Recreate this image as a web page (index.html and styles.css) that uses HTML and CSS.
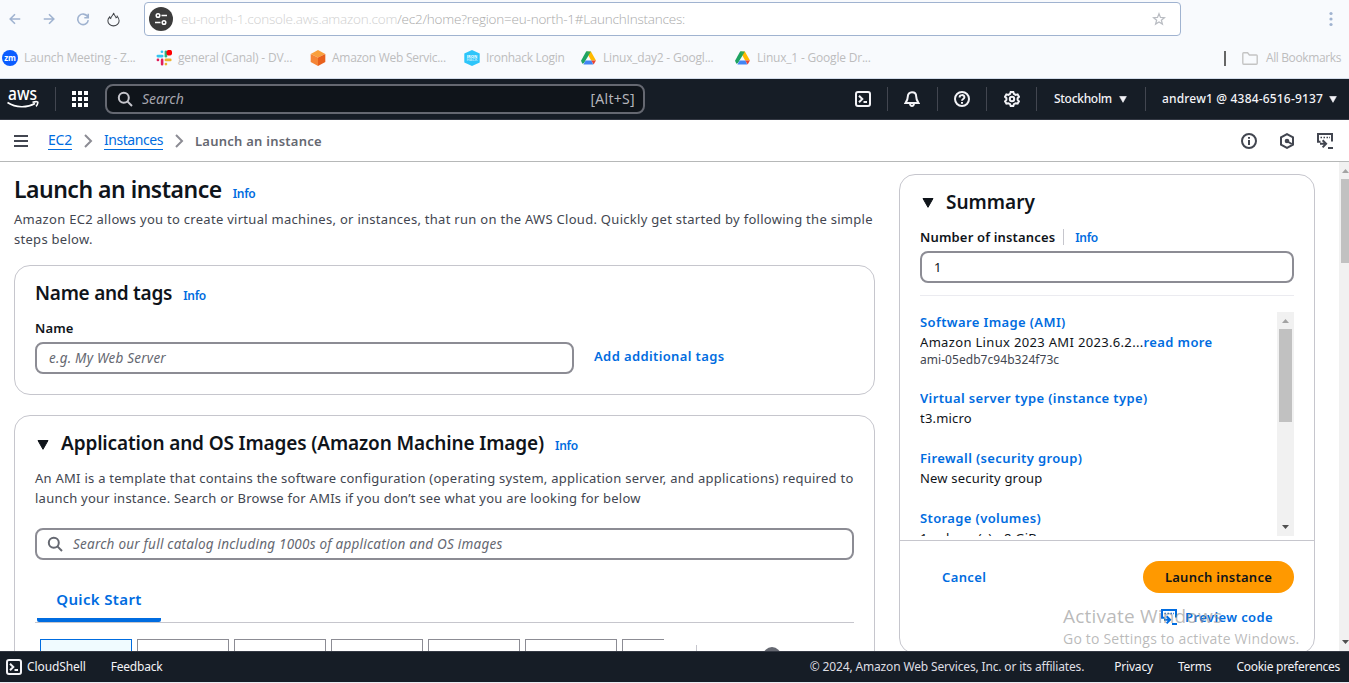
FILE: index.html
```html
<!DOCTYPE html>
<html lang="en">
<head>
<meta charset="utf-8">
<title>Launch an instance | EC2</title>
<link rel="stylesheet" href="styles.css">
</head>
<body>
<svg class="defs" aria-hidden="true">
  <symbol id="shell" viewBox="0 0 16 16"><rect x="1" y="1" width="14" height="14" rx="2"/><path d="M4 4.800 7.300 8 4 11.200M8.500 11H12"/></symbol>
  <symbol id="lens" viewBox="0 0 16 16"><circle cx="6.800" cy="6.800" r="5"/><path d="m10.400 10.400 4.600 4.600"/></symbol>
  <symbol id="code" viewBox="0 0 16 16"><path d="M15 8.500V1H1v7.800h2.500M11 15h5M3 10.800h6M5.600 7.200l3.500 3.600-3.500 3.600"/><path d="M3.500 4.400h1.500M6.500 4.400H8M9.500 4.400h1.500M12 4.400h.8" stroke-width="1.500"/></symbol>
  <symbol id="chev" viewBox="0 0 16 16"><path d="m5 2 6 6-6 6"/></symbol>
  <symbol id="drive" viewBox="0 0 16 14"><path fill="#1ea362" d="M5.500 0H8L8 4.400 3.200 12.400 1.500 13.200 0 10z"/><path fill="#ffba00" d="M8 0h2.600L16 9.600h-5.200L8 4.600z"/><path fill="#34a853" d="M5.500 0h5L8 4.600z"/><path fill="#4285f4" d="M5 9.600h6.200L13 14H2.500z"/><path fill="#ea4335" d="M11 9.600h5L13.400 14z"/></symbol>
  <symbol id="down" viewBox="0 0 12 10"><path d="M1 .5h10L6 9.300z" fill="currentColor" stroke="currentColor" stroke-width="1" stroke-linejoin="round"/></symbol>
</svg>

<header class="browser">
  <div class="toolbar">
    <div class="navbtns">
      <svg class="bi" viewBox="0 0 16 16"><path d="M14 8H2.500M8 2.500 2.500 8 8 13.500"/></svg>
      <svg class="bi" viewBox="0 0 16 16"><path d="M2 8h11.500M8 2.500 13.500 8 8 13.500"/></svg>
      <svg class="bi" viewBox="0 0 16 16"><path d="M13.200 5.300A6 6 0 1 0 14 9.200M14 2v4.500H9.500"/></svg>
      <svg class="bi flame" viewBox="0 0 16 16"><path d="M8.200 1c.2 2.500 2.300 3.600 2.600 5.200.8-.3 1.100-1 1.200-1.700 1 1.300 2 3 2 4.700a6 5.600 0 0 1-12 0c0-1.700 1-3.100 1.900-4 .1.900.5 1.500 1.100 1.800C5.200 4.500 7.800 3.600 8.200 1z"/></svg>
    </div>
    <div class="urlbar">
      <span class="site"><svg viewBox="0 0 24 24"><circle cx="9" cy="8.500" r="1.800"/><path d="M12.500 8.500H18M6 15.500h5.500"/><circle cx="15" cy="15.500" r="1.800"/></svg></span>
      <span class="url"><span class="host">eu-north-1.console.aws.amazon.com</span>/ec2/home?region=eu-north-1#LaunchInstances:</span>
      <svg class="star" viewBox="0 0 16 16"><path d="m8 2 1.700 4.200 4.500.3-3.500 2.900 1.200 4.400L8 11.400l-3.900 2.400 1.200-4.400L1.800 6.500l4.500-.3z"/></svg>
    </div>
    <svg class="dots" viewBox="0 0 4 16"><circle cx="2" cy="2.500" r="1.600"/><circle cx="2" cy="8" r="1.600"/><circle cx="2" cy="13.500" r="1.600"/></svg>
  </div>
  <nav class="bookmarks">
    <span class="bm b1"><span class="zoomico">zm</span><span class="t">Launch Meeting - Z...</span></span>
    <span class="bm b2"><svg class="fav" viewBox="0 0 16 16"><g stroke-width="2.600" stroke-linecap="round" fill="none"><path stroke="#36c5f0" d="M1.800 6.100h4.400M5.900 1.800h.1"/><path stroke="#2eb67d" d="M9.900 1.800v4.400"/><path stroke="#ecb22e" d="M9.900 9.900h4.400M9.900 14.100h.1"/><path stroke="#e01e5a" d="M6.100 9.900v4.300M1.900 9.900H2"/></g><circle cx="13.300" cy="2.700" r="2.900" fill="#f00"/></svg><span class="t">general (Canal) - DV...</span></span>
    <span class="bm b3"><svg class="fav" viewBox="0 0 16 16"><path fill="#f9a03c" d="m8 0 7.300 4L8 7.500.7 4z"/><path fill="#f58536" d="M.7 4 8 7.500V16L.7 12z"/><path fill="#e8601c" d="M15.300 4 8 7.500V16l7.300-4z"/></svg><span class="t">Amazon Web Servic...</span></span>
    <span class="bm b4"><svg class="fav" viewBox="0 0 16 16"><path fill="#2dc5fa" d="m8 0 7.700 3.600v8.800L8 16 .3 12.400V3.600z"/><text class="iron" x="8" y="7.500">IRON</text><text class="iron dim" x="8" y="11">HACK</text></svg><span class="t">Ironhack Login</span></span>
    <span class="bm b5"><svg class="fav"><use href="#drive"/></svg><span class="t">Linux_day2 - Googl...</span></span>
    <span class="bm b6"><svg class="fav"><use href="#drive"/></svg><span class="t">Linux_1 - Google Dr...</span></span>
    <span class="allbm"><svg class="folder" viewBox="0 0 16 13"><path d="M.8 11V1.700c0-.5.3-.9.8-.9h4L7.400 3h6.900c.5 0 .9.300.9.800V11.300c0 .5-.4.900-.9.900H1.600c-.5 0-.8-.5-.8-1.200z"/></svg><span class="t">All Bookmarks</span></span>
  </nav>
</header>

<div class="awsnav">
  <svg class="awslogo" viewBox="0 0 32 22"><text x="1" y="12" textLength="29" lengthAdjust="spacingAndGlyphs">aws</text><path d="M.5 14.500C9 20 20 20 28 15.500"/><path d="M25.500 14.200c4-.9 5.700-.7 5.300.7-.2 1.200-.8 2.600-1.800 3.500"/></svg>
  <i class="vr v1"></i>
  <svg class="grid" viewBox="0 0 16 16"><path d="M0 0h4v4H0zM6 0h4v4H6zM12 0h4v4h-4zM0 6h4v4H0zM6 6h4v4H6zM12 6h4v4h-4zM0 12h4v4H0zM6 12h4v4H6zM12 12h4v4h-4z"/></svg>
  <div class="navsearch"><svg class="ico lens"><use href="#lens"/></svg><span class="ph">Search</span><span class="key">[Alt+S]</span></div>
  <div class="navright">
    <span class="cell"><svg class="ico"><use href="#shell"/></svg></span>
    <span class="cell"><svg class="ico" viewBox="0 0 16 16"><path d="M8 1.200c-2.600 0-4.200 1.900-4.200 4.300 0 3.200-1 4.500-2.300 6.500h13c-1.300-2-2.300-3.300-2.300-6.500 0-2.400-1.600-4.300-4.200-4.300zM6 12.500c.3 3.300 3.700 3.300 4 0"/></svg></span>
    <span class="cell"><svg class="ico" viewBox="0 0 16 16"><circle cx="8" cy="8" r="7"/><path d="M5.600 6.400c0-3 4.800-3 4.800-.2C10.400 8 8 7.900 8 9.700M8 11v1.700"/></svg></span>
    <span class="cell"><svg class="ico" viewBox="0 0 16 16"><path d="M6.700 1h2.600l.6 1.900 1.700 1 2-.5L15 5.800 13.600 7.200v1.700l1.400 1.400-1.400 2.300-2-.4-1.700 1L9.300 15H6.700l-.6-1.800-1.700-1-2 .4L1 10.300l1.400-1.400V7.200L1 5.800l1.400-2.400 2 .5 1.700-1z"/><circle cx="8" cy="8" r="2.200"/></svg></span>
    <span class="menu region"><span class="t">Stockholm</span><svg class="caret"><use href="#down"/></svg></span>
    <span class="menu acct"><span class="t">andrew1 @ 4384-6516-9137</span><svg class="caret"><use href="#down"/></svg></span>
  </div>
</div>

<div class="crumbs">
  <svg class="burger" viewBox="0 0 14 12"><path d="M0 1h14M0 6h14M0 11h14"/></svg>
  <a class="lnk c1">EC2</a>
  <svg class="chev k1"><use href="#chev"/></svg>
  <a class="lnk c2">Instances</a>
  <svg class="chev k2"><use href="#chev"/></svg>
  <span class="here">Launch an instance</span>
  <div class="tools">
    <svg class="ico" viewBox="0 0 16 16"><circle cx="8" cy="8" r="7"/><path d="M8 7v5M8 4v1.800"/></svg>
    <svg class="ico hex" viewBox="0 0 16 16"><path d="m8 1.100 6 3.200v7.400l-6 3.200-6-3.200V4.300z"/><circle class="dot" cx="8" cy="8" r="2.300"/><path d="m8.500 8.500 4.300 2.500"/></svg>
    <svg class="ico"><use href="#code"/></svg>
  </div>
</div>

<main class="content">
  <section class="left">
    <div class="head"><h1>Launch an instance</h1><a class="info">Info</a></div>
    <p class="desc"><span class="d1">Amazon EC2 allows you to create virtual machines, or instances, that run on the AWS Cloud. Quickly get started by following the simple</span><br><span class="d1">steps below.</span></p>

    <div class="card names">
      <div class="head"><h2 class="h-name">Name and tags</h2><a class="info">Info</a></div>
      <div class="label">Name</div>
      <div class="namerow"><div class="field"><span class="ph">e.g. My Web Server</span></div><a class="blink addtags">Add additional tags</a></div>
    </div>

    <div class="card images">
      <div class="head"><svg class="caret big"><use href="#down"/></svg><h2 class="h-app">Application and OS Images (Amazon Machine Image)</h2><a class="info">Info</a></div>
      <p class="desc"><span class="d3">An AMI is a template that contains the software configuration (operating system, application server, and applications) required to</span><br><span class="d4">launch your instance. Search or Browse for AMIs if you don’t see what you are looking for below</span></p>
      <div class="field wide"><svg class="ico"><use href="#lens"/></svg><span class="ph">Search our full catalog including 1000s of application and OS images</span></div>
      <div class="tabs"><span class="tab">Quick Start</span></div>
      <div class="tiles">
        <i class="tile on"></i><i class="tile"></i><i class="tile"></i><i class="tile"></i><i class="tile"></i><i class="tile"></i><i class="tile cut"></i>
        <i class="tsep"></i><i class="browse"></i>
      </div>
    </div>
  </section>

  <aside class="summary">
    <div class="sumtop">
      <div class="head"><svg class="caret big"><use href="#down"/></svg><h2>Summary</h2></div>
      <div class="numrow"><span class="label numl">Number of instances</span><a class="info">Info</a></div>
      <div class="field num"><span class="one">1</span></div>
      <hr>
      <div class="scroller">
        <div class="list">
          <div class="item"><a class="blink">Software Image (AMI)</a><div class="val"><span class="ver">Amazon Linux 2023 AMI 2023.6.2...</span><a class="blink more">read more</a></div><div class="sub">ami-05edb7c94b324f73c</div></div>
          <div class="item"><a class="blink">Virtual server type (instance type)</a><div class="val">t3.micro</div></div>
          <div class="item"><a class="blink">Firewall (security group)</a><div class="val">New security group</div></div>
          <div class="item"><a class="blink">Storage (volumes)</a><div class="val">1 volume(s) - 8 GiB</div></div>
        </div>
        <div class="bar inner"><i class="up"></i><i class="thumb"></i><i class="down"></i></div>
      </div>
    </div>
    <div class="actions">
      <div class="arow"><a class="blink">Cancel</a><span class="launch">Launch instance</span></div>
      <div class="preview"><svg class="ico"><use href="#code"/></svg><a class="blink">Preview code</a></div>
    </div>
  </aside>
  <div class="bar page"><i class="up"></i><i class="thumb"></i><i class="down"></i></div>
</main>

<footer class="foot">
  <svg class="ico"><use href="#shell"/></svg>
  <span class="f1">CloudShell</span><span class="f2">Feedback</span>
  <span class="f3">© 2024, Amazon Web Services, Inc. or its affiliates.</span>
  <span class="f4">Privacy</span><span class="f5">Terms</span><span class="f6">Cookie preferences</span>
</footer>

<div class="watermark"><div class="w1">Activate Windows</div><div class="w2">Go to Settings to activate Windows.</div></div>
</body>
</html>
```

FILE: styles.css
```css
* { box-sizing: border-box; }
body { margin: 0; width: 1349px; height: 683px; overflow: hidden; display: flex; flex-direction: column; background: #fff; font: 13px/20px "Noto Sans", "Open Sans", sans-serif; color: #0f141a; border-bottom: 1px solid #e9ebf3; }
svg { display: block; flex: none; }
i { display: block; flex: none; }
span, a, h1, h2 { white-space: nowrap; }
.defs { position: absolute; width: 0; height: 0; }
.ico { width: 16px; height: 16px; fill: none; stroke: currentColor; stroke-width: 2; }

/* Browser chrome */
.browser { height: 79px; background: #f8fafd; border-bottom: 1px solid #d3dcea; font-family: "Open Sans", sans-serif; flex: none; }
.toolbar { height: 38px; display: flex; align-items: center; }
.navbtns { width: 144px; display: flex; gap: 20px; padding-left: 8px; }
.bi { width: 14px; height: 14px; fill: none; stroke: #a0b3d0; stroke-width: 1.8; }
.bi.flame { width: 15px; height: 15px; margin-left: -4px; stroke: #44474c; stroke-width: 1.1; }
.urlbar { width: 1037px; height: 34px; display: flex; align-items: center; background: #fff; border: 1px solid #a0b3d0; border-radius: 4px; padding-left: 4px; }
.site { width: 24px; height: 24px; border-radius: 50%; background: #3c3c3c; }
.site svg { width: 24px; height: 24px; fill: none; stroke: #fff; stroke-width: 1.5; }
.url { margin-left: 8px; font-size: 13.5px; color: #aaa; font-weight: 300; letter-spacing: -.21px; }
.host { color: #d0d0d0; }
.star { width: 14px; height: 14px; margin: 0 14px 0 auto; fill: none; stroke: #b9bcc2; stroke-width: 1.4; }
.dots { width: 4px; height: 16px; margin-left: 148px; fill: #a0b3d0; }
.bookmarks { height: 40px; display: flex; align-items: center; font-size: 12px; color: #bdbdbd; padding-left: 2px; letter-spacing: -.2px; }
.bm { display: flex; align-items: center; gap: 6px; height: 20px; width: 154px; }
.b3 { letter-spacing: -.28px; }
.b4 { width: 117px; letter-spacing: -.28px; }
.fav { width: 16px; height: 16px; }
.b5 .fav, .b6 .fav { width: 15px; height: 14px; }
.b5, .b6 { gap: 7px; }
.zoomico { width: 16px; height: 16px; border-radius: 50%; background: #0b5cff; color: #fff; font: bold 8px/15px "Open Sans", sans-serif; text-align: center; }
.iron { font: bold 4px "Open Sans", sans-serif; fill: #fff; text-anchor: middle; letter-spacing: 0; }
.iron.dim { opacity: .6; }
.allbm { margin-left: auto; display: flex; align-items: center; gap: 8px; padding-right: 8px; letter-spacing: -.38px; }
.allbm::before { content: ""; width: 2px; height: 15px; background: #666; margin-right: 8px; }
.folder { width: 16px; height: 13px; fill: none; stroke: #c4c4c4; stroke-width: 1.4; }

/* Console navigation */
.awsnav { height: 41px; flex: none; background: #161d26; border-bottom: 1px solid #333843; display: flex; align-items: center; color: #f3f3f7; padding-left: 7px; }
.awslogo { width: 32px; height: 22px; overflow: visible; fill: none; stroke: #fff; stroke-width: 1.6; }
.awslogo text { font: 500 18px "Noto Sans", sans-serif; fill: #fff; stroke: none; }
.vr { width: 1px; height: 24px; background: #424650; margin: 0 16px; }
.grid { width: 16px; height: 16px; fill: #fff; margin-right: 17px; }
.navsearch { width: 540px; height: 30px; border: 2px solid #656871; border-radius: 8px; background: #0f141a; display: flex; align-items: center; padding: 0 8px 0 10px; color: #c6c6cd; }
.navsearch .ph { margin-left: 9px; color: #a4a4ad; font-size: 14px; letter-spacing: 0; }
.key { margin-left: auto; font-size: 14px; letter-spacing: .3px; color: #b4b4bb; }
.ph { font-style: italic; color: #656871; font-size: 13.5px; letter-spacing: .23px; }
.navright { margin-left: auto; display: flex; align-items: center; }
.cell { width: 49.7px; height: 24px; border-right: 1px solid #424650; display: flex; align-items: center; justify-content: center; }
.menu { display: flex; align-items: center; height: 24px; font-size: 12px; font-weight: 500; }
.region { width: 109px; padding-left: 17px; gap: 7px; border-right: 1px solid #424650; letter-spacing: -.3px; }
.acct { width: 203px; padding-left: 16px; gap: 6px; letter-spacing: .17px; }
.caret { width: 8px; height: 7px; }
.caret.big { width: 12px; height: 10px; margin-left: 2px; position: relative; top: 1px; }

/* Breadcrumbs */
.crumbs { height: 42px; flex: none; border-bottom: 1px solid #b6b8b8; display: flex; align-items: center; padding: 0 16px 0 14px; color: #424650; font-size: 14px; }
.burger { width: 14px; height: 12px; stroke: #424650; stroke-width: 2; margin-right: 20px; }
.lnk { color: #006ce0; border-bottom: 1px solid #006ce0; line-height: 18px; }
.c1 { width: 24px; letter-spacing: -.2px; }
.c2 { letter-spacing: -.45px; }
.chev { width: 16px; height: 16px; margin: 0 8px; fill: none; stroke: #8c8c94; stroke-width: 2; }
.here { font-weight: 600; color: #656871; font-size: 13px; letter-spacing: .25px; }
.tools { margin-left: auto; display: flex; gap: 22px; }
.hex .dot { fill: currentColor; stroke: none; }

/* Content */
.content { height: 489px; flex: none; display: flex; overflow: hidden; padding-left: 14px; }
.left { width: 861px; padding-top: 12px; }
.head { display: flex; align-items: baseline; }
h1, h2 { margin: 0; font-weight: 600; }
h1 { font-size: 23px; line-height: 30px; letter-spacing: -.5px; }
h2 { font-size: 19px; line-height: 24px; }
.h-name { letter-spacing: -.27px; }
.h-app { letter-spacing: -.14px; }
.info { margin-left: 11px; font-size: 12px; font-weight: 600; color: #006ce0; letter-spacing: -.3px; }
.desc { margin: 5px 0 0; color: #424650; }
.d1 { letter-spacing: .285px; }
.d3 { letter-spacing: .256px; }
.d4 { letter-spacing: .24px; }
.card { border: 1px solid #c6c6cd; border-radius: 16px; padding: 15px 20px 0; }
.names { height: 130px; margin-top: 16px; }
.label { font-weight: 600; letter-spacing: .16px; }
.names .label { margin-top: 12px; }
.namerow { display: flex; align-items: center; margin-top: 4px; }
.field { width: 539px; height: 32px; border: 2px solid #8c8c94; border-radius: 8px; display: flex; align-items: center; padding: 0 12px; color: #656871; }
.blink { color: #006ce0; font-weight: 600; letter-spacing: .38px; }
.addtags { margin: -4px 0 0 20px; }
.images { margin-top: 20px; height: 280px; }
.head .caret { align-self: center; }
.images .head h2 { margin-left: 12px; }
.images .desc { margin-top: 12px; }
.wide { width: 819px; margin-top: 20px; padding: 0 10px; }
.wide .ph { margin-left: 10px; }
.tabs { border-bottom: 1px solid #c6c6cd; height: 63px; padding: 22px 0 0 2px; display: flex; }
.tab { width: 124px; height: 40px; border-bottom: 4px solid #006ce0; border-radius: 2px; color: #006ce0; font-weight: 600; font-size: 15px; line-height: 34px; text-align: center; letter-spacing: .36px; }
.tiles { display: flex; gap: 5px; padding: 16px 0 0 5px; }
.tile { width: 92px; height: 60px; border: 1px solid #8c8c94; }
.tile.on { border-color: #006ce0; background: #f0fbff; }
.tile.cut { width: 42px; border-right: 0; }
.tsep { width: 1px; height: 60px; background: #c6c6cd; margin: 6px 0 0 27px; }
.browse { width: 18px; height: 18px; border-radius: 50%; background: #656871; margin: 8px 0 0 61px; }

/* Summary panel */
.summary { width: 416px; height: 480px; margin: 12px 0 0 24px; border: 1px solid #c6c6cd; border-radius: 16px; flex: none; }
.sumtop { height: 366px; padding: 15px 20px 0; border-bottom: 1px solid #c6c6cd; }
.summary h2 { margin-left: 12px; }
.numrow { display: flex; margin-top: 13px; }
.numrow .info { border-left: 1px solid #c6c6cd; height: 16px; line-height: 17px; margin: 2px 0 0 8px; padding-left: 11px; }
.num { width: 374px; margin-top: 4px; color: #0f141a; }
.summary hr { border: 0; border-top: 1px solid #ebebf0; margin: 12px 0 16px; }
.scroller { display: flex; height: 224px; overflow: hidden; }
.list { width: 357px; }
.item { margin-bottom: 20px; }
.item .blink { display: inline-block; height: 20px; vertical-align: top; }
.val { height: 20px; letter-spacing: .2px; }
.ver { letter-spacing: .33px; }
.sub { font-size: 12px; line-height: 16px; color: #424650; letter-spacing: .05px; }
.bar { background: #f1f1f1; display: flex; flex-direction: column; align-items: center; flex: none; }
.inner { width: 17px; height: 224px; }
.up, .down { width: 7px; height: 4px; background: #a3a3a3; clip-path: polygon(50% 0, 100% 100%, 0 100%); }
.down { background: #505050; clip-path: polygon(0 0, 100% 0, 50% 100%); margin-top: auto; }
.thumb { background: #c1c1c1; }
.inner .up { margin-top: 7px; }
.inner .thumb { width: 13px; height: 93px; margin-top: 6px; }
.inner .down { margin-bottom: 7px; }
.page { width: 10px; margin-left: auto; align-items: flex-end; }
.page .up { margin-top: 7px; }
.page .thumb { width: 8px; height: 84px; margin-top: 6px; }
.page .down { margin-bottom: 7px; }
.actions { padding: 20px 20px 0 42px; }
.arow { display: flex; align-items: center; justify-content: space-between; }
.launch { width: 151px; height: 32px; line-height: 32px; border-radius: 16px; background: #ff9900; text-align: center; font-weight: 600; letter-spacing: .27px; }
.preview { display: flex; align-items: center; justify-content: flex-end; gap: 8px; margin: 14px 21px 0 0; color: #006ce0; }

/* Footer */
.foot { height: 31px; flex: none; background: #161d26; color: #f3f3f7; display: flex; align-items: center; padding: 0 9px 0 6px; font-size: 12px; border-top: 1px solid #333843; letter-spacing: -.2px; }
.f1 { margin-left: 5px; letter-spacing: -.1px; }
.f2 { margin-left: 25px; }
.f3 { margin-left: auto; color: #dedee3; letter-spacing: -.155px; }
.f4 { margin-left: 30px; }
.f5, .f6 { margin-left: 25px; }
.f6 { letter-spacing: -.27px; }

/* Desktop activation notice floats over the page */
.watermark { position: absolute; left: 1063px; top: 603px; color: rgba(140, 140, 140, .6); font-family: "Open Sans", sans-serif; font-weight: 400; white-space: nowrap; letter-spacing: .2px; }
.w1 { font-size: 19px; line-height: 26px; }
.w2 { font-size: 14px; line-height: 20px; }
```
